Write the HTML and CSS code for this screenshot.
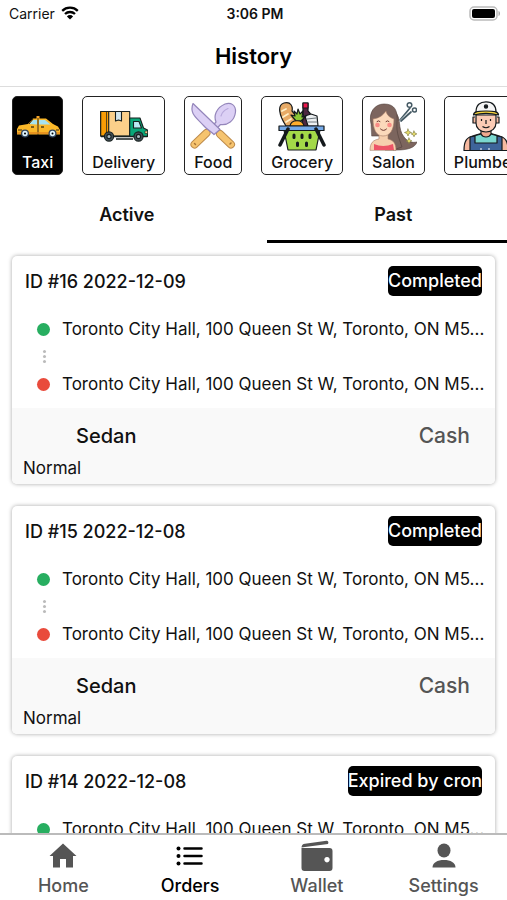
FILE: index.html
```
<!DOCTYPE html>
<html lang="en">
<head>
    <meta charset="UTF-8">
    <meta name="viewport" content="width=device-width, initial-scale=1.0">
    <title>History</title>
    <link rel="stylesheet" href="styles.css">
</head>
<body>
    <div class="status-bar">
        <div class="carrier">
            <span>Carrier</span>
            <svg width="18" height="14" viewBox="0 0 18 14">
                <path d="M1.2 4.8a11.2 11.2 0 0 1 15.6 0M4 8a7.2 7.2 0 0 1 10 0" fill="none" stroke="#000" stroke-width="2.3"/>
                <path d="M9 13.6 5.9 10.4a4.4 4.4 0 0 1 6.2 0z"/>
            </svg>
        </div>
        <div class="time">3:06 PM</div>
        <div class="battery">
            <svg width="32" height="15" viewBox="0 0 32 15">
                <rect x="1" y="1" width="27" height="13" rx="4" fill="#fff" stroke="#bbb" stroke-width="1.5"/>
                <rect x="3" y="3" width="23" height="9" rx="2"/>
                <path d="M29.5 5c2 .6 2 4.4 0 5z" fill="#aaa"/>
            </svg>
        </div>
    </div>

    <header class="header">
        <h1>History</h1>
    </header>

    <div class="services">
        <button type="button" class="service selected">
            <!-- taxi -->
            <svg viewBox="0 0 48 50">
                <path d="M22.5 15h3v3h-3z" fill="#f7a428"/>
                <path d="M3 33.5V28l2-3.5 9-1.5 5-5.5h13l7 5.5 5 2.5 2 3.5v4.5z" fill="#fbb829"/>
                <path d="M15 23l4-4h4v4.5zM25 19h6l5.5 4.5H25z" fill="#a6e2ee"/>
                <path d="M24 17v17M19 18l-4 5M4 29h4M42 29h3" stroke="#3a2a14" stroke-width="1" fill="none"/>
                <path d="M17 26h3M27 26h3" stroke="#000"/>
                <path d="M3 32h43" stroke="#e2891c" stroke-width="1.5"/>
                <circle cx="11" cy="32.5" r="4" fill="#30445c"/><circle cx="11" cy="32.5" r="2.7" fill="#dff3fa"/>
                <circle cx="38.5" cy="32.5" r="4" fill="#30445c"/><circle cx="38.5" cy="32.5" r="2.7" fill="#dff3fa"/>
                <circle cx="11" cy="32.5" r="1"/><circle cx="38.5" cy="32.5" r="1"/>
            </svg>
            <span>Taxi</span>
        </button>
        <button type="button" class="service">
            <!-- delivery truck -->
            <svg viewBox="0 0 48 50" stroke="#17201f" stroke-width="1.1" stroke-linejoin="round">
                <path d="M.7 10.5h29V35H.7z" fill="#fbd08a"/>
                <path d="M.7 10.5h8V35h-8z" fill="#f99d05"/>
                <path d="M6.5 10.5v24" stroke-width=".7"/>
                <path d="M15.5 10.5h6v9.5l-3-1-3 1z" fill="#d5e8ee"/>
                <path d="M29.7 17H40l3.5 10 4 2v6.5H29.7z" fill="#0aa779"/>
                <path d="M33.5 20.5H39l2.5 6.5h-8z" fill="#b9ebf4"/>
                <path d="M45 30h2.5v2.5H45z" fill="#fbd08a" stroke-width=".6"/>
                <path d="M1 35.5h46.5" stroke-width="1.6"/>
                <path d="M16 38h17" stroke-width="1.5"/>
                <circle cx="9" cy="35.5" r="4.6" fill="#43525a"/><circle cx="9" cy="35.5" r="2.1" fill="#a9bac0"/>
                <circle cx="38.5" cy="35.5" r="4.6" fill="#43525a"/><circle cx="38.5" cy="35.5" r="2.1" fill="#a9bac0"/>
            </svg>
            <span>Delivery</span>
        </button>
        <button type="button" class="service">
            <!-- knife and spoon -->
            <svg viewBox="0 0 48 50" stroke-linejoin="round" stroke-linecap="round">
                <path d="M17.5 32 5.5 43.5" stroke="#bd8b4c" stroke-width="8"/>
                <path d="M17.5 32 5.5 43.5" stroke="#f6c46f" stroke-width="6"/>
                <path d="M20 29l7-8c-2.5-6 0-14 9-18 6-2 11 1 10.5 8-1 9-8 13.5-15 12.5L23.5 32z" fill="#dcd0f5" stroke="#9486bb" stroke-width="1.2"/>
                <path d="M32 15c1-4 3.5-6 7-7.5" fill="none" stroke="#b8a9dc" stroke-width="1.2"/>
                <path d="M31 33 42 43.5" stroke="#bd8b4c" stroke-width="8"/>
                <path d="M31 33 42 43.5" stroke="#f6c46f" stroke-width="6"/>
                <path d="M4 2.5 31 28.5l-6 5c-4-4-7-5-10-8.5C8 17 0 13 4 2.5z" fill="#dcd0f5" stroke="#9486bb" stroke-width="1.2"/>
                <path d="M5.5 42.5l1 1M41 43l1-1" stroke="#a87436" stroke-width="1.5"/>
            </svg>
            <span>Food</span>
        </button>
        <button type="button" class="service">
            <!-- grocery basket -->
            <svg viewBox="0 0 48 50" stroke="#14191c" stroke-width="1.2" stroke-linejoin="round" stroke-linecap="round">
                <path d="M8 25C1 14-1 4 6 2s9 4 8 8c3 3 5 8 4 15z" fill="#e7aa66"/>
                <path d="M4 10l4-2M5 16l5-3M8 21l5-3" stroke="#fff0c8" stroke-width="1.8"/>
                <path d="M25 2h5v8c4 3 4 8 4 15H23c2-5 3-10 2-15z" fill="#4d2841"/>
                <path d="M25 2h5v5h-5z" fill="#ed174c"/>
                <path d="M27 15l6-2 6 2 1 10H30z" fill="#eceff1"/>
                <path d="M29 18l9-1M30 21h9" stroke="#6e797f"/>
                <path d="M18 20l-5-6 4 1-1-5 3 3 1-5 2 5 3-3-1 6 4-1-5 5z" fill="#8cc936"/>
                <path d="M12 25c1-7 13-7 14 0z" fill="#ffad2c"/>
                <path d="M6 29h36l-4 20H10z" fill="#a3d948"/>
                <path d="M1 25h45v4.5H1z" fill="#74a9e8"/>
                <path d="M10 28 2 44M38 28l8 16" stroke-width="3.5"/>
                <path d="M16 34v2.5M24 34v2.5M32 34v2.5M19.5 42v2.5M28.5 42v2.5" stroke-width="3"/>
            </svg>
            <span>Grocery</span>
        </button>
        <button type="button" class="service">
            <!-- woman with scissors -->
            <svg viewBox="0 0 48 50" stroke-linejoin="round" stroke-linecap="round">
                <path d="M26 11c7 6 2 16 9 25 4 5 8 6 13 5-2 6-10 8-20 8H16V9z" fill="#7c655e" stroke="#51403b" stroke-width=".6"/>
                <path d="M2 23C-1 11 6 3 15 3c11 0 14 7 13 18-1 12 3 18 5 25l-9 3-10-14H3z" fill="#7c655e" stroke="#51403b" stroke-width=".6"/>
                <path d="M1 49c0-7 3-10 9-11v-6h9v6c5 1 8 4 8 11z" fill="#f6cfae" stroke="#a37963" stroke-width=".6"/>
                <path d="M5 43q9 4 19 0l1 6H5z" fill="#ed5467"/>
                <path d="M4 18c7-1 10-4 13-8 1 5 5 7 8 8 0 11-4 17-11 17S4 28 4 18z" fill="#fbd9bb" stroke="#a37963" stroke-width=".6"/>
                <path d="M8 20.5q1.5-1.5 3 0M17 20.5q1.5-1.5 3 0M11.5 28q3 3 6 0" fill="none" stroke="#6d3a32" stroke-width="1"/>
                <circle cx="8.5" cy="24" r="2.3" fill="#fa8c86"/><circle cx="20.5" cy="24" r="2.3" fill="#fa8c86"/>
                <path d="M31 19 41 7M32 20l10-9" stroke="#455a64" stroke-width="1.7"/>
                <path d="M30.5 20l8-8" stroke="#aab8bd" stroke-width="1"/>
                <circle cx="40.5" cy="4" r="2.3" fill="none" stroke="#455a64" stroke-width="1.5"/>
                <circle cx="45.5" cy="9" r="2" fill="none" stroke="#455a64" stroke-width="1.5"/>
                <path d="M39 28l1 2.5 2.5 1-2.5 1-1 2.5-1-2.5-2.5-1 2.5-1zM45 30l.9 2 2 .9-2 .9-.9 2-.9-2-2-.9 2-.9zM40 37l.9 2 2 .9-2 .9-.9 2-.9-2-2-.9 2-.9z" fill="#e9de6a" stroke="#77733a" stroke-width=".6"/>
            </svg>
            <span>Salon</span>
        </button>
        <button type="button" class="service">
            <!-- plumber -->
            <svg viewBox="0 0 48 50" stroke="#14191c" stroke-width="1.2" stroke-linejoin="round">
                <path d="M2 49.5c0-9 2-13 10-15l7-2h10l7 2c8 2 10 6 10 15z" fill="#f6b9a0"/>
                <path d="M12 35l7-2h10l7 2v10H12z" fill="#7ad7cf"/>
                <path d="M8 49.5V36l5-1v7h22v-7l5 1v13.5z" fill="#3e649a"/>
                <path d="M19 27h10v6c-2 4-8 4-10 0z" fill="#f0a98e"/>
                <path d="M13 16h-2v6h3M35 16h2v6h-3" fill="#f6b9a0"/>
                <path d="M14 14h20v8c0 5-4 9-10 9s-10-4-10-9z" fill="#fbcbb5"/>
                <path d="M14 11C14 4 18 .8 24 .8S34 4 34 11z" fill="#f5f5f5"/>
                <path d="M11.5 14c0-3 3-4 12.5-4s12.5 1 12.5 4c-8-2-17-2-25 0z" fill="#f7d43d"/>
                <circle cx="24" cy="5.5" r="1.6" fill="#14191c"/>
                <path d="M19.5 18v2M28.5 18v2M24 19v4M20.5 25.5q3.5 2.5 7 0" fill="none"/>
                <path d="M18 48h2M26 48h2" stroke="#fff"/>
            </svg>
            <span>Plumber</span>
        </button>
    </div>

    <div class="tabs" role="tablist">
        <button type="button" class="tab" role="tab" aria-selected="false">Active</button>
        <button type="button" class="tab active" role="tab" aria-selected="true">Past</button>
    </div>

    <main class="orders">
        <article class="order">
            <div class="order-top">
                <h2>ID #16 2022-12-09</h2>
                <span class="badge">Completed</span>
            </div>
            <div class="route">
                <div class="stop pickup">Toronto City Hall, 100 Queen St W, Toronto, ON M5...</div>
                <div class="dots"><i></i><i></i><i></i></div>
                <div class="stop dropoff">Toronto City Hall, 100 Queen St W, Toronto, ON M5...</div>
            </div>
            <div class="order-bottom">
                <div class="fare">
                    <span>Sedan</span>
                    <span class="payment">Cash</span>
                </div>
                <div class="type">Normal</div>
            </div>
        </article>
        <article class="order">
            <div class="order-top">
                <h2>ID #15 2022-12-08</h2>
                <span class="badge">Completed</span>
            </div>
            <div class="route">
                <div class="stop pickup">Toronto City Hall, 100 Queen St W, Toronto, ON M5...</div>
                <div class="dots"><i></i><i></i><i></i></div>
                <div class="stop dropoff">Toronto City Hall, 100 Queen St W, Toronto, ON M5...</div>
            </div>
            <div class="order-bottom">
                <div class="fare">
                    <span>Sedan</span>
                    <span class="payment">Cash</span>
                </div>
                <div class="type">Normal</div>
            </div>
        </article>
        <article class="order">
            <div class="order-top">
                <h2>ID #14 2022-12-08</h2>
                <span class="badge">Expired by cron</span>
            </div>
            <div class="route">
                <div class="stop pickup">Toronto City Hall, 100 Queen St W, Toronto, ON M5...</div>
            </div>
        </article>
    </main>

    <nav class="bottom-nav">
        <a href="#home">
            <svg viewBox="0 0 32 32"><path d="M16 3.5 29.5 16H26v11.5h-7V19h-6v8.5H6V16H2.5z"/></svg>
            <span>Home</span>
        </a>
        <a href="#orders" class="current">
            <svg viewBox="0 0 32 32">
                <path d="M10.5 8.5h17M10.5 16h17M10.5 23.5h17" stroke="currentColor" stroke-width="2.5" stroke-linecap="round"/>
                <circle cx="4.5" cy="8.5" r="2"/><circle cx="4.5" cy="16" r="2"/><circle cx="4.5" cy="23.5" r="2"/>
            </svg>
            <span>Orders</span>
        </a>
        <a href="#wallet">
            <svg viewBox="0 0 32 32">
                <path d="M.5 7.5C.5 5 2 4 4 3.7L25.5.8C27 .7 28 2 27 4L4 7z"/>
                <path fill-rule="evenodd" d="M.5 8h28c2 0 3 1 3 3v17c0 2-1 3-3 3h-25c-2 0-3-1-3-3zM26 17a2.7 2.7 0 1 0 .01 0z"/>
            </svg>
            <span>Wallet</span>
        </a>
        <a href="#settings">
            <svg viewBox="0 0 32 32">
                <ellipse cx="16" cy="10.5" rx="6.5" ry="7"/>
                <path d="M4.5 27.5c0-5 5-7.5 11.5-7.5s11.5 2.5 11.5 7.5z"/>
            </svg>
            <span>Settings</span>
        </a>
    </nav>
</body>
</html>
```
FILE: styles.css
```
* {
    box-sizing: border-box;
}

body {
    display: flex;
    flex-direction: column;
    height: 100vh;
    margin: 0;
    overflow: hidden;
    background-color: #fff;
    color: #111;
    font-family: Inter, "Liberation Sans", sans-serif;
    font-size: 17px;
}

button {
    padding: 0;
    border: none;
    background: none;
    color: inherit;
    font-family: inherit;
    cursor: pointer;
}

.status-bar {
    display: grid;
    grid-template-columns: 1fr auto 1fr;
    align-items: center;
    flex: none;
    height: 26px;
    padding: 0 6px 0 9px;
    font-size: 14px;
}

.carrier {
    display: flex;
    align-items: center;
    gap: 6px;
}

.time {
    font-weight: 600;
}

.battery {
    display: flex;
    justify-content: flex-end;
}

.header {
    display: flex;
    align-items: center;
    justify-content: center;
    flex: none;
    height: 61px;
    border-bottom: 1px solid #ddd;
}

.header h1 {
    margin: 0;
    color: #000;
    font-size: 22px;
    font-weight: 600;
}

.services {
    display: flex;
    flex: none;
    gap: 19px;
    padding: 9px 12px 0;
    overflow: hidden;
}

.service {
    display: flex;
    flex-direction: column;
    align-items: center;
    flex: none;
    height: 79px;
    padding-top: 4px;
    border: 1px solid #222;
    border-radius: 5px;
    font-size: 16px;
    font-weight: 500;
    line-height: 23px;
}

.service.selected {
    background-color: #000;
    color: #fff;
}

.service svg {
    flex: none;
    width: 48px;
    height: 50px;
}

.service span {
    padding: 0 9px;
}

.tabs {
    display: flex;
    flex: none;
    gap: 13px;
    margin-top: 10px;
    overflow: hidden;
}

.tab {
    flex: 0 0 50%;
    height: 58px;
    padding-top: 3px;
    border-bottom: 3px solid transparent;
    font-size: 18px;
    font-weight: 600;
}

.tab.active {
    border-bottom-color: #000;
}

.orders {
    display: flex;
    flex: 1;
    flex-direction: column;
    gap: 22px;
    min-height: 0;
    padding: 13px 12px 0;
    overflow: hidden;
}

.order {
    flex: none;
    border-radius: 5px;
    box-shadow: 0 0 4px rgba(0, 0, 0, 0.35);
    overflow: hidden;
}

.order-top {
    display: flex;
    align-items: center;
    justify-content: space-between;
    padding: 10px 13px 0;
}

.order-top h2 {
    margin: 0;
    font-size: 18px;
    font-weight: 500;
}

.badge {
    border-radius: 5px;
    background-color: #000;
    color: #fff;
    font-size: 18px;
    font-weight: 500;
    line-height: 30px;
}

.route {
    padding: 21px 8px 12px 24px;
}

.stop {
    display: flex;
    align-items: center;
    gap: 12px;
    padding-left: 1px;
    line-height: 24px;
    white-space: nowrap;
}

.stop::before {
    content: "";
    flex: none;
    width: 13px;
    height: 13px;
    border-radius: 50%;
}

.pickup::before {
    background-color: #27ae60;
}

.dropoff::before {
    background-color: #e94b3c;
}

.dots {
    display: flex;
    flex-direction: column;
    align-items: center;
    justify-content: center;
    gap: 2px;
    width: 16px;
    height: 31px;
}

.dots i {
    width: 3px;
    height: 3px;
    border-radius: 50%;
    background-color: #bbb;
}

.order-bottom {
    height: 76px;
    padding: 12px 25px 0 11px;
    background-color: #f9f9f9;
}

.fare {
    display: flex;
    justify-content: space-between;
    padding-left: 53px;
    font-size: 20px;
    font-weight: 500;
    line-height: 32px;
}

.payment {
    color: #555;
    font-size: 21px;
}

.type {
    line-height: 32px;
}

.bottom-nav {
    display: flex;
    flex: none;
    height: 67px;
    border-top: 2px solid #bbb;
    background-color: #fff;
}

.bottom-nav a {
    display: flex;
    flex: 1;
    flex-direction: column;
    align-items: center;
    padding-top: 5px;
    color: #555;
    font-size: 18px;
    font-weight: 500;
    line-height: 28px;
    text-decoration: none;
}

.bottom-nav svg {
    flex: none;
    width: 32px;
    height: 32px;
    fill: currentColor;
}

.bottom-nav a.current {
    color: #000;
}
```
